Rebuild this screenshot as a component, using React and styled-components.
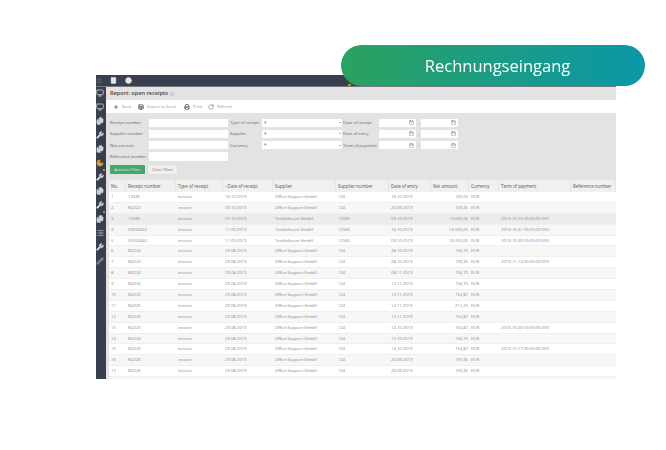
import styled, { createGlobalStyle } from "styled-components"
import { Plus, Sheet, Printer, RotateCw, Calendar, Menu, Calculator, Circle, Monitor, Files, Wrench, Moon, List, Pencil, Info } from "lucide-react"

const columns = [
  { key: "no", label: "No.", width: 17 },
  { key: "receipt", label: "Receipt number", width: 50 },
  { key: "type", label: "Type of receipt", width: 47 },
  { key: "date", label: "- Date of receipt", width: 50 },
  { key: "supplier", label: "Supplier", width: 63 },
  { key: "supplierNo", label: "Supplier number", width: 53 },
  { key: "entry", label: "Date of entry", width: 42 },
  { key: "amount", label: "Net amount", width: 38 },
  { key: "currency", label: "Currency", width: 30 },
  { key: "term", label: "Term of payment", width: 72 },
  { key: "ref", label: "Reference number", width: 45 },
]

const office = "Office Support GmbH"
const test = "Testlieferant GmbH"

const rows = [
  ["12345", "16.10.2019", office, "123", "16.10.2019", "100,00", ""],
  ["N2222", "09.10.2019", office, "124", "26.09.2019", "139,45", ""],
  ["12345", "07.10.2019", test, "12345", "09.10.2019", "13.030,00", "2019-10-16 00:00:00.000"],
  ["00023442", "11.09.2019", test, "12345", "16.10.2019", "16.593,00", "2019-10-31 00:00:00.000"],
  ["00023442", "11.09.2019", test, "12345", "09.10.2019", "16.593,00", "2019-10-30 00:00:00.000"],
  ["N2224", "29.08.2019", office, "124", "28.10.2019", "194,70", ""],
  ["N2222", "29.08.2019", office, "124", "28.10.2019", "139,45", "2019-11-14 00:00:00.000"],
  ["N2224", "29.08.2019", office, "124", "08.11.2019", "194,70", ""],
  ["N2224", "29.08.2019", office, "124", "12.11.2019", "194,70", ""],
  ["N2223", "29.08.2019", office, "124", "13.11.2019", "154,87", ""],
  ["N2225", "29.08.2019", office, "124", "14.11.2019", "211,25", ""],
  ["N2223", "29.08.2019", office, "124", "15.11.2019", "154,87", ""],
  ["N2223", "29.08.2019", office, "124", "14.10.2019", "154,87", "2019-10-30 00:00:00.000"],
  ["N2224", "29.08.2019", office, "124", "15.10.2019", "194,70", ""],
  ["N2223", "29.08.2019", office, "124", "14.10.2019", "154,87", "2019-10-17 00:00:00.000"],
  ["N2226", "29.08.2019", office, "124", "26.09.2019", "100,35", ""],
  ["N2226", "29.08.2019", office, "124", "26.09.2019", "100,35", ""],
  ["N2226", "29.08.2019", office, "124", "26.09.2019", "100,35", ""],
]

const sideItems = [
  { Icon: Monitor },
  { Icon: Monitor },
  { Icon: Files, solid: true },
  { Icon: Wrench, solid: true },
  { Icon: Files, solid: true },
  { Icon: Moon, solid: true, accent: true },
  { Icon: Wrench, solid: true, dot: true },
  { Icon: Files, solid: true },
  { Icon: Wrench, solid: true },
  { Icon: Files, solid: true, dot: true },
  { Icon: List },
  { Icon: Wrench, solid: true },
  { Icon: Pencil, solid: true, dim: true },
]

const App = () => {
  return (
    <Page>
      <GlobalStyle />
      <Stage>
        <Screen>
          <TopBar>
            <HamburgerIcon size={6} />
            <TopIcons>
              <Calculator size={7} fill="currentColor" />
              <Circle size={7} fill="currentColor" />
            </TopIcons>
            <AlertMark />
          </TopBar>
          <Body>
            <Sidebar>
              {sideItems.map(({ Icon, solid, accent, dot, dim }, i) => (
                <SideItem key={i} $accent={accent} $dim={dim}>
                  <Icon size={8} strokeWidth={2.2} fill={solid ? "currentColor" : "none"} />
                  {dot && <SideDot />}
                </SideItem>
              ))}
            </Sidebar>
            <Main>
              <Title>Report: open receipts <Info size={4} /></Title>
              <Toolbar>
                <ToolButton $width={25}><Plus size={6} strokeWidth={3} /> Back</ToolButton>
                <ToolButton $width={46}><Sheet size={6} strokeWidth={3} /> Export to Excel</ToolButton>
                <ToolButton $width={24}><Printer size={6} strokeWidth={3} /> Print</ToolButton>
                <ToolButton><RotateCw size={6} strokeWidth={2} /> Refresh</ToolButton>
              </Toolbar>
              <Filter>
                <FilterGrid>
                  <FieldLabel>Receipt number</FieldLabel>
                  <TextInput />
                  <FieldLabel>Type of receipt</FieldLabel>
                  <SelectBox>*<Caret /></SelectBox>
                  <FieldLabel>Date of receipt</FieldLabel>
                  <DateRange />

                  <FieldLabel>Supplier number</FieldLabel>
                  <TextInput />
                  <FieldLabel>Supplier</FieldLabel>
                  <SelectBox>*<Caret /></SelectBox>
                  <FieldLabel>Date of entry</FieldLabel>
                  <DateRange />

                  <FieldLabel>Net amount</FieldLabel>
                  <TextInput />
                  <FieldLabel>Currency</FieldLabel>
                  <SelectBox>*<Caret /></SelectBox>
                  <FieldLabel>Term of payment</FieldLabel>
                  <DateRange />

                  <FieldLabel>Reference number</FieldLabel>
                  <TextInput />
                </FilterGrid>
                <FilterActions>
                  <ActivateButton>Activate Filter</ActivateButton>
                  <ClearButton>Clear Filter</ClearButton>
                </FilterActions>
              </Filter>
              <ReportTable>
                <HeadRow>
                  {columns.map((c) => (
                    <HeadCell key={c.key} $width={c.width}>{c.label}</HeadCell>
                  ))}
                </HeadRow>
                {rows.map((r, i) => (
                  <Row key={i} $shade={i === 2 ? "#ececec" : i % 2 === 1 ? "#f7f7f7" : "#fff"}>
                    <Cell $width={17}>{i + 1}</Cell>
                    <Cell $width={50}>{r[0]}</Cell>
                    <Cell $width={47}>invoice</Cell>
                    <Cell $width={50}>{r[1]}</Cell>
                    <Cell $width={63}>{r[2]}</Cell>
                    <Cell $width={53}>{r[3]}</Cell>
                    <Cell $width={42}>{r[4]}</Cell>
                    <Cell $width={38} $right>{r[5]}</Cell>
                    <Cell $width={30}>EUR</Cell>
                    <Cell $width={72}>{r[6]}</Cell>
                    <Cell $width={45} />
                  </Row>
                ))}
              </ReportTable>
            </Main>
          </Body>
        </Screen>
        <Badge>Rechnungseingang</Badge>
      </Stage>
    </Page>
  )
}

const DateRange = () => (
  <DateGroup>
    <DateInput><Calendar size={5} /></DateInput>
    <Dash>-</Dash>
    <DateInput><Calendar size={5} /></DateInput>
  </DateGroup>
)

const GlobalStyle = createGlobalStyle`
  html, body {
    margin: 0;
    background: #fff;
  }
`

const Page = styled.div`
  width: 666px;
  height: 450px;
  overflow: hidden;
  font-family: "Open Sans", "Noto Sans", sans-serif;
  padding: 75px 0 0 96px;
  box-sizing: border-box;
`

const Stage = styled.div`
  position: relative;
  width: 520px;
`

const Screen = styled.div`
  width: 520px;
  height: 304px;
  overflow: hidden;
  background: #e3e3e3;
  filter: blur(0.7px);
  display: flex;
  flex-direction: column;
`

const TopBar = styled.div`
  position: relative;
  height: 12px;
  flex: none;
  background: #3a3f50;
  border-bottom: 1px solid #77787f;
  box-sizing: border-box;
  display: flex;
  align-items: center;
  color: #e6e6e6;
`

const HamburgerIcon = styled(Menu)`
  color: #7d808c;
`

const TopIcons = styled.div`
  display: flex;
  gap: 8px;
  margin-left: 8px;
`

const AlertMark = styled.span`
  position: absolute;
  left: 252px;
  bottom: 0;
  width: 3px;
  height: 2px;
  background: #c08a2a;
`

const Body = styled.div`
  flex: 1;
  display: flex;
  min-height: 0;
`

const Sidebar = styled.div`
  width: 10px;
  flex: none;
  background: #3a3f50;
  display: flex;
  flex-direction: column;
  align-items: flex-start;
  gap: 6px;
  padding-top: 2px;
  box-sizing: border-box;
`

const SideItem = styled.span`
  position: relative;
  display: flex;
  color: ${(p) => (p.$accent ? "#e0a020" : p.$dim ? "#7d808c" : "#cfd0d5")};
`

const SideDot = styled.span`
  position: absolute;
  top: -4px;
  right: -1px;
  width: 2px;
  height: 2px;
  border-radius: 50%;
  background: #e89a2c;
`

const Main = styled.div`
  flex: 1;
  min-width: 0;
`

const Title = styled.div`
  height: 13px;
  padding-left: 4px;
  font-size: 5.6px;
  font-weight: 600;
  line-height: 13px;
  color: #444;

  svg {
    color: #999;
    vertical-align: -0.5px;
  }
`

const Toolbar = styled.div`
  height: 13px;
  background: #fff;
  display: flex;
  align-items: center;
  padding-left: 7px;
`

const ToolButton = styled.span`
  width: ${(p) => (p.$width ? `${p.$width}px` : "auto")};
  flex: none;
  display: flex;
  align-items: center;
  gap: 3px;
  font-size: 4.2px;
  color: #999;
  white-space: nowrap;

  svg {
    color: #666;
  }
`

const Filter = styled.div`
  height: 67px;
  padding: 5.5px 0 0 4px;
  box-sizing: border-box;
`

const FilterGrid = styled.div`
  display: grid;
  grid-template-columns: 39px 81px 32px 81px 36px auto;
  grid-auto-rows: 8.3px;
  row-gap: 3px;
  justify-content: start;
  align-items: center;
`

const FieldLabel = styled.span`
  font-size: 4.2px;
  color: #666;
  white-space: nowrap;
`

const TextInput = styled.div`
  height: 8.3px;
  width: 79px;
  background: #fff;
`

const SelectBox = styled.div`
  height: 8.3px;
  width: 80px;
  background: #fff;
  display: flex;
  align-items: center;
  justify-content: space-between;
  padding: 0 1px 0 2px;
  box-sizing: border-box;
  font-size: 4.4px;
  color: #555;
`

const Caret = styled.span`
  width: 0;
  height: 0;
  border-left: 1.2px solid transparent;
  border-right: 1.2px solid transparent;
  border-top: 1.6px solid #666;
`

const DateGroup = styled.div`
  display: flex;
  align-items: center;
`

const DateInput = styled.div`
  height: 8.3px;
  width: 37px;
  background: #fff;
  display: flex;
  align-items: center;
  justify-content: flex-end;
  padding-right: 2px;
  box-sizing: border-box;
  color: #777;
`

const Dash = styled.span`
  width: 5px;
  text-align: center;
  font-size: 4.4px;
  color: #777;
`

const FilterActions = styled.div`
  display: flex;
  gap: 3px;
  margin-top: 4.3px;
`

const ActivateButton = styled.div`
  height: 9px;
  width: 35px;
  border-radius: 1px;
  background: #43a868;
  color: #d9efe0;
  font-size: 4.2px;
  line-height: 9px;
  text-align: center;
`

const ClearButton = styled.div`
  height: 9px;
  width: 29px;
  border-radius: 1px;
  background: #f0f0f0;
  color: #777;
  font-size: 4.2px;
  line-height: 9px;
  text-align: center;
  box-shadow: 0 0 1px #bbb;
`

const ReportTable = styled.div`
  margin-left: 3px;
  background: #fff;
`

const HeadRow = styled.div`
  display: flex;
  height: 12px;
  background: #f0f0f0;
`

const HeadCell = styled.div`
  width: ${(p) => p.$width}px;
  flex: none;
  box-sizing: border-box;
  padding-left: 2px;
  border-right: 1px solid #e4e4e4;
  font-size: 4.4px;
  line-height: 12px;
  color: #555;
  white-space: nowrap;
  overflow: hidden;
`

const Row = styled.div`
  display: flex;
  height: 10.9px;
  box-sizing: border-box;
  background: ${(p) => p.$shade};
  border-bottom: 1px solid #efefef;
`

const Cell = styled.div`
  width: ${(p) => p.$width}px;
  flex: none;
  box-sizing: border-box;
  padding: ${(p) => (p.$right ? "0 1px 0 0" : "0 0 0 2px")};
  font-size: 4.2px;
  line-height: 10px;
  color: #888;
  white-space: nowrap;
  overflow: hidden;
  text-align: ${(p) => (p.$right ? "right" : "left")};
`

const Badge = styled.div`
  position: absolute;
  top: -30px;
  left: 245px;
  width: 304px;
  height: 41px;
  border-radius: 21px;
  background: linear-gradient(95deg, #2ca25f 0%, #0a97a8 100%);
  color: #fff;
  font-size: 16.5px;
  line-height: 41px;
  text-align: center;
  padding-left: 9px;
  box-sizing: border-box;
  filter: blur(0.3px);
`

export default App
